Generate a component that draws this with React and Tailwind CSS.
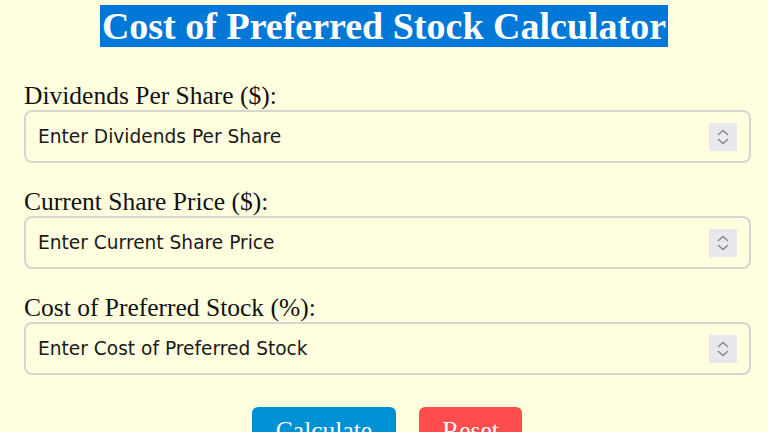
import { useState } from 'react'

function Spinner() {
  return (
    <div className="pointer-events-none absolute right-[14px] top-1/2 flex h-[28px] w-[28px] -translate-y-1/2 flex-col items-center justify-center bg-[#e8e8ee]">
      <svg width="14" height="20" viewBox="0 0 14 20" fill="none" stroke="#8a8a94" strokeWidth="1.6" strokeLinecap="round" strokeLinejoin="round">
        <path d="M2.5 7.5 L7 3.5 L11.5 7.5" />
        <path d="M2.5 12.5 L7 16.5 L11.5 12.5" />
      </svg>
    </div>
  )
}

function Field({ id, label, placeholder, value, onChange }) {
  return (
    <div className="flex flex-col">
      <label htmlFor={id} className="text-[25.5px] leading-[28px] text-[#111]">
        {label}
      </label>
      <div className="relative w-[727px]">
        <input
          id={id}
          type="text"
          value={value}
          onChange={(event) => onChange(event.target.value)}
          placeholder={placeholder}
          className="h-[53px] w-full rounded-[8px] border-2 border-[#d6d6d0] bg-[#ffffe0] pl-[12px] pr-[50px] font-['DejaVu_Sans',sans-serif] text-[18.6px] text-[#111] outline-none placeholder:text-[#1a1a1a]"
        />
        <Spinner />
      </div>
    </div>
  )
}

function App() {
  const [dividends, setDividends] = useState('')
  const [price, setPrice] = useState('')
  const [cost, setCost] = useState('')

  const handleCalculate = () => {
    const d = parseFloat(dividends)
    const p = parseFloat(price)
    if (!isNaN(d) && !isNaN(p) && p !== 0) {
      setCost(((d / p) * 100).toFixed(2))
    }
  }

  const handleReset = () => {
    setDividends('')
    setPrice('')
    setCost('')
  }

  return (
    <main className="min-h-screen bg-[#ffffe0] px-[24px] font-['Liberation_Serif',serif] text-[#111]">
      <h1 className="pt-[5px] text-center text-[38px] font-bold leading-[43px]">
        <span className="bg-[#0078d7] px-[2px] text-white">Cost of Preferred Stock Calculator</span>
      </h1>

      <div className="mt-[34px] flex flex-col gap-[25px]">
        <Field
          id="dividends"
          label="Dividends Per Share ($):"
          placeholder="Enter Dividends Per Share"
          value={dividends}
          onChange={setDividends}
        />
        <Field
          id="price"
          label="Current Share Price ($):"
          placeholder="Enter Current Share Price"
          value={price}
          onChange={setPrice}
        />
        <Field
          id="cost"
          label="Cost of Preferred Stock (%):"
          placeholder="Enter Cost of Preferred Stock"
          value={cost}
          onChange={setCost}
        />
      </div>

      <div className="mt-[32px] flex justify-center gap-[23px] pl-[6px]">
        <button
          type="button"
          onClick={handleCalculate}
          className="h-[48px] w-[144px] rounded-[6px] bg-[#0091d5] text-[25.5px] text-white"
        >
          Calculate
        </button>
        <button
          type="button"
          onClick={handleReset}
          className="h-[48px] w-[103px] rounded-[6px] bg-[#ff4c4c] text-[25.5px] text-white"
        >
          Reset
        </button>
      </div>
    </main>
  )
}

export default App
